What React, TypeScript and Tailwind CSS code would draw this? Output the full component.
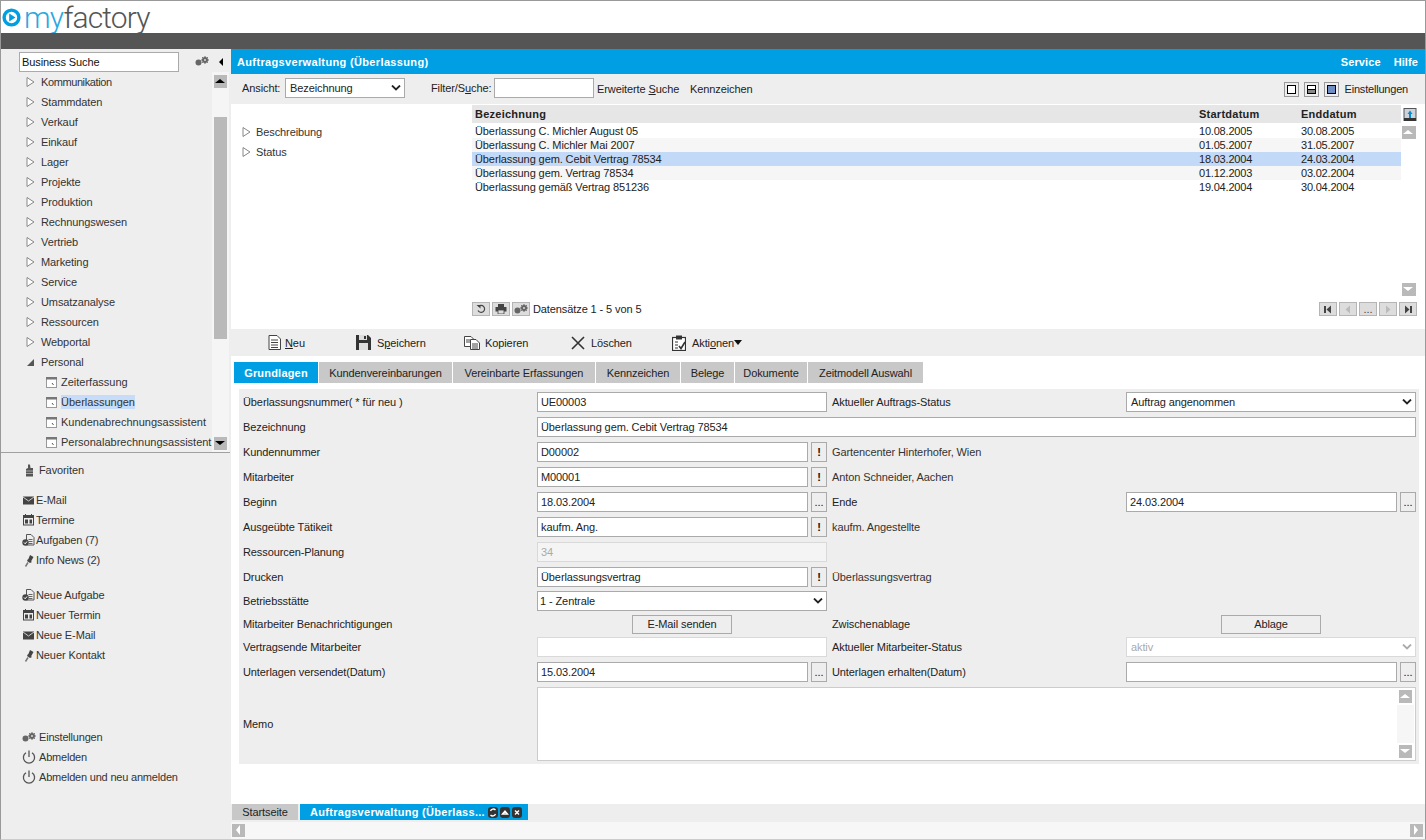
import React from "react";

const I = ({ w = 12, h = 12, children, className = "" }: { w?: number; h?: number; children: React.ReactNode; className?: string }) => (
  <svg width={w} height={h} viewBox={`0 0 ${w} ${h}`} className={`shrink-0 ${className}`}>{children}</svg>
);
const Tri = () => <I w={9} h={12}><path d="M1 1.5 L8 6 L1 10.5 Z" fill="#fff" stroke="#888" /></I>;
const TriOpen = () => <I w={9} h={12}><path d="M1 10 L8 10 L8 3 Z" fill="#555" /></I>;
const Win = () => (
  <I w={11} h={11}><rect x="0.5" y="0.5" width="10" height="10" fill="#fff" stroke="#999" /><rect x="0" y="0" width="11" height="2.5" fill="#777" /><path d="M6 6 L7.5 8" stroke="#555" /></I>
);
const Gears = ({ c = "#666" }: { c?: string }) => (
  <I w={14} h={10}><circle cx="3.5" cy="6.5" r="3" fill={c} /><circle cx="10" cy="4" r="3" fill={c} /><path d="M10 0 V8 M6 4 H14 M7.2 1.2 L12.8 6.8 M12.8 1.2 L7.2 6.8" stroke={c} strokeWidth="1" /><circle cx="10" cy="4" r="1" fill="#ddd" /></I>
);
const Mail = () => <I w={11} h={9}><rect width="11" height="8" y="0.5" fill="#444" /><path d="M0 1 L5.5 5 L11 1" stroke="#ccc" fill="none" /></I>;
const Cal = () => (
  <I w={11} h={12}><rect x="0.5" y="1.5" width="10" height="9.5" fill="#eee" stroke="#444" /><rect x="0" y="1" width="11" height="3" fill="#444" /><path d="M2.5 0 V2 M8.5 0 V2" stroke="#444" /><rect x="2" y="5.5" width="3" height="4" fill="#444" /><rect x="6.5" y="5.5" width="2.5" height="4" fill="#444" /></I>
);
const Task = () => (
  <I w={13} h={12}><path d="M4.5 0.5 H9 L12 3.5 V11 H4.5 Z" fill="#eee" stroke="#555" /><path d="M6.5 5.5 H10.5 M6.5 7.5 H10.5 M6.5 9.5 H10.5" stroke="#666" /><circle cx="3.5" cy="8.5" r="3.2" fill="#444" /><path d="M2 8.5 L3.2 9.8 L5 7.5" stroke="#fff" fill="none" /></I>
);
const Pin = () => (
  <I w={11} h={13}><path d="M7 1 L10.5 3 L8 7.5 L5 6 Z" fill="#444" /><path d="M5 5 L9 8 L7 9 L4 7 Z" fill="#444" /><path d="M5 8.5 L2.5 12.5" stroke="#777" strokeWidth="1.5" /></I>
);
const Power = () => (
  <I w={14} h={14}><path d="M4 2.8 A5.6 5.6 0 1 0 10 2.8" fill="none" stroke="#555" strokeWidth="1.3" /><path d="M7 0.5 V7" stroke="#555" strokeWidth="1.3" /></I>
);
const Thumb = () => (
  <I w={9} h={13}><path d="M3 0.5 H5 L5.5 4 H8 V12.5 H1 V5 L3 4 Z" fill="#555" /><path d="M1 7 H8 M1 9.5 H8" stroke="#ddd" strokeWidth="0.6" /></I>
);
const ScrollBtn = ({ dark, dir, wide }: { dark?: boolean; dir: "up" | "down" | "left" | "right"; wide?: boolean }) => {
  const c = dark ? "#000" : "#fff";
  const p = { up: "M2 9 L7 5 L12 9 Z", down: "M2 5 L12 5 L7 9 Z", left: "M9 2 L5 7 L9 12 Z", right: "M5 2 L9 7 L5 12 Z" }[dir];
  return <div className={`${wide ? "w-[14px]" : "w-[13px]"} h-[13px] bg-[#b9b9b9] shrink-0 overflow-hidden`}><I w={14} h={14} className="-ml-px -mt-px"><path d={p} fill={c} /></I></div>;
};

const U = ({ children }: { children: string }) => <span className="underline underline-offset-1">{children}</span>;

const tree = ["Kommunikation", "Stammdaten", "Verkauf", "Einkauf", "Lager", "Projekte", "Produktion", "Rechnungswesen", "Vertrieb", "Marketing", "Service", "Umsatzanalyse", "Ressourcen", "Webportal"];
const subs = ["Zeiterfassung", "Überlassungen", "Kundenabrechnungsassistent", "Personalabrechnungsassistent"];

const Sidebar = () => (
  <aside className="w-[230px] shrink-0 bg-[#eeeeee] flex flex-col">
    <div className="h-[23px] flex items-end pl-[18px]">
      <div className="w-[160px] h-[20px] bg-white border border-[#aaaaaa] flex items-center pl-[2px] text-[#111]">Business Suche</div>
      <div className="ml-[16px] mb-[6px]"><Gears /></div>
      <div className="ml-[10px] mb-[6px] w-0 h-0 border-y-[4px] border-y-transparent border-r-[4px] border-r-black" />
    </div>
    <div className="h-[380px] flex">
      <div className="w-[211px] shrink-0 overflow-hidden">
        {tree.map((t, i) => (
          <div key={t} className={`h-[20px] flex items-center pl-[25px] gap-[6px] ${i === 0 ? "tracking-[-0.4px]" : ""}`}><Tri />{t}</div>
        ))}
        <div className="h-[20px] flex items-center pl-[25px] gap-[6px]"><TriOpen />Personal</div>
        {subs.map((t, i) => (
          <div key={t} className="h-[20px] flex items-center pl-[45px] gap-[4px] whitespace-nowrap tracking-normal">
            <Win />
            <span className={i === 1 ? "bg-[#c6dcf8] leading-[14px]" : ""}>{t}</span>
          </div>
        ))}
      </div>
      <div className="w-[17px] bg-[#f5f5f5] flex flex-col items-center pt-[3px] pb-[2px]">
        <ScrollBtn dark dir="up" />
        <div className="w-[13px] h-[222px] bg-[#b9b9b9] mt-[29px]" />
        <div className="flex-1" />
        <ScrollBtn dark dir="down" />
      </div>
    </div>
    <div className="h-px w-[229px] bg-[#a0a0a0]" />
    <div className="flex flex-col">
      <div className="h-[20px] mt-[7px] flex items-center pl-[24px] gap-[5px]"><Thumb />Favoriten</div>
      <div className="h-[20px] mt-[10px] flex items-center pl-[22px] gap-[2px]"><Mail />E-Mail</div>
      <div className="h-[20px] flex items-center pl-[22px] gap-[2px]"><Cal />Termine</div>
      <div className="h-[20px] flex items-center pl-[21px] gap-px"><Task />Aufgaben (7)</div>
      <div className="h-[20px] flex items-center pl-[22px] gap-[2px]"><Pin />Info News (2)</div>
      <div className="h-[20px] mt-[15px] flex items-center pl-[21px] gap-px"><Task />Neue Aufgabe</div>
      <div className="h-[20px] flex items-center pl-[22px] gap-[2px]"><Cal />Neuer Termin</div>
      <div className="h-[20px] flex items-center pl-[22px] gap-[2px]"><Mail />Neue E-Mail</div>
      <div className="h-[20px] flex items-center pl-[22px] gap-[2px]"><Pin />Neuer Kontakt</div>
      <div className="h-[20px] mt-[62px] flex items-center pl-[21px] gap-[3px] tracking-[-0.2px]"><Gears />Einstellungen</div>
      <div className="h-[20px] flex items-center pl-[21px] gap-[3px] tracking-[-0.2px]"><Power />Abmelden</div>
      <div className="h-[20px] flex items-center pl-[21px] gap-[3px] tracking-[-0.2px]"><Power />Abmelden und neu anmelden</div>
    </div>
  </aside>
);

const rows = [
  ["Überlassung C. Michler August 05", "10.08.2005", "30.08.2005"],
  ["Überlassung C. Michler Mai 2007", "01.05.2007", "31.05.2007"],
  ["Überlassung gem. Cebit Vertrag 78534", "18.03.2004", "24.03.2004"],
  ["Überlassung gem. Vertrag 78534", "01.12.2003", "03.02.2004"],
  ["Überlassung gemäß Vertrag 851236", "19.04.2004", "30.04.2004"],
];

const PagerBtn = ({ children }: { children: React.ReactNode }) => (
  <div className="w-[18px] h-[14px] bg-[#dddddd] border border-[#b5b5b5] flex items-center justify-center text-[#333] leading-none">{children}</div>
);

const TopList = () => (
  <div className="h-[225px] bg-white flex">
    <div className="w-[241px] shrink-0 pt-[18px] pl-[11px]">
      <div className="h-[20px] flex items-center gap-[5px]"><Tri />Beschreibung</div>
      <div className="h-[20px] flex items-center gap-[5px]"><Tri />Status</div>
    </div>
    <div className="w-[929px] shrink-0 flex flex-col">
      <div className="h-[18px] mt-px bg-[#e6e6e6] flex items-center font-bold tracking-[0.25px] text-[#222]">
        <div className="w-[727px] pl-[3px]">Bezeichnung</div>
        <div className="w-[102px]">Startdatum</div>
        <div>Enddatum</div>
      </div>
      <div className="h-px" />
      {rows.map((r, i) => (
        <div key={r[0]} className={`h-[14px] flex items-center text-[#222] ${i === 2 ? "bg-[#c2d9f7]" : i % 2 ? "bg-[#f6f6f6]" : ""}`}>
          <div className="w-[727px] pl-[3px]">{r[0]}</div>
          <div className="w-[102px] tracking-[-0.2px]">{r[1]}</div>
          <div className="tracking-[-0.2px]">{r[2]}</div>
        </div>
      ))}
      <div className="flex-1" />
      <div className="h-[14px] mb-[13px] flex items-center gap-[2px]">
        <PagerBtn><I w={10} h={10}><path d="M2.5 2.5 A3.5 3.5 0 1 1 2 6.5" fill="none" stroke="#444" strokeWidth="1.2" /><path d="M0.5 1 L4.5 1 L4.5 4.5 Z" fill="#444" /></I></PagerBtn>
        <PagerBtn><I w={12} h={10}><rect x="3" y="0" width="6" height="3" fill="#444" /><rect x="0.5" y="3" width="11" height="4.5" fill="#444" /><rect x="3" y="6" width="6" height="4" fill="#ddd" stroke="#444" strokeWidth="0.8" /></I></PagerBtn>
        <PagerBtn><Gears /></PagerBtn>
        <span className="ml-px text-[#222]">Datensätze 1 - 5 von 5</span>
      </div>
    </div>
    <div className="flex-1 flex flex-col">
      <div className="h-[16px] mt-[4px] pl-[2px]">
        <I w={14} h={14}><rect x="1" y="0.5" width="12" height="12" fill="#ccd3da" stroke="#555" /><rect x="1" y="10" width="12" height="3" fill="#333" /><path d="M7 2.5 L9.5 6 H8 V10 H6 V6 H4.5 Z" fill="#0a8ad0" /></I>
      </div>
      <div className="h-[170px] mt-[2px] ml-px flex flex-col items-start">
        <ScrollBtn dir="up" wide />
        <div className="flex-1" />
        <ScrollBtn dir="down" wide />
      </div>
    </div>
  </div>
);

const PagerBar = () => (
  <div className="h-0 flex justify-end pr-[8px] gap-[2px] relative -top-[27px]">
    {[
      <I w={10} h={9} key="a"><rect x="1" y="1" width="2" height="7" fill="#444" /><path d="M8 0.5 V8.5 L3.5 4.5 Z" fill="#444" /></I>,
      <I w={10} h={9} key="b"><path d="M7 0.5 V8.5 L2.5 4.5 Z" fill="#bbb" /></I>,
      <span key="c" className="text-[#444]">...</span>,
      <I w={10} h={9} key="d"><path d="M3 0.5 V8.5 L7.5 4.5 Z" fill="#bbb" /></I>,
      <I w={10} h={9} key="e"><rect x="7" y="1" width="2" height="7" fill="#444" /><path d="M2 0.5 V8.5 L6.5 4.5 Z" fill="#444" /></I>,
    ].map((x, i) => <PagerBtn key={i}>{x}</PagerBtn>)}
  </div>
);

const Toolbar = () => (
  <div className="h-[27px] bg-[#eeeeee] flex items-center text-[#222]">
    <div className="w-[125px] pl-[37px] flex items-center gap-[4px] shrink-0">
      <I w={13} h={15}><path d="M1 0.5 H9 L12.5 4 V14.5 H1 Z" fill="#fff" stroke="#444" /><path d="M3 5 H10 M3 7.5 H10 M3 10 H10 M3 12.5 H10" stroke="#444" /></I>
      <span><U>N</U>eu</span>
    </div>
    <div className="w-[108px] flex items-center gap-[6px] shrink-0">
      <I w={15} h={15}><path d="M0 0 H12 L15 3 V15 H0 Z" fill="#333" /><rect x="3" y="0" width="8" height="5" fill="#ddd" /><rect x="8" y="1" width="2" height="3" fill="#333" /><rect x="3" y="8" width="9" height="7" fill="#ddd" /></I>
      <span>S<U>p</U>eichern</span>
    </div>
    <div className="w-[107px] flex items-center gap-[5px] shrink-0">
      <I w={16} h={14}><path d="M0.5 0.5 H7 L9.5 3 V10.5 H0.5 Z" fill="#fff" stroke="#444" /><path d="M6.5 3.5 H12 L15.5 7 V13.5 H6.5 Z" fill="#fff" stroke="#444" /><path d="M2 4 H6 M2 6 H6 M8 8 H14 M8 10 H14 M8 12 H14" stroke="#444" /></I>
      <span>Kopieren</span>
    </div>
    <div className="w-[101px] flex items-center gap-[6px] shrink-0">
      <I w={14} h={14}><path d="M1 1 L13 13 M13 1 L1 13" stroke="#333" strokeWidth="1.6" /></I>
      <span>Löschen</span>
    </div>
    <div className="flex items-center gap-[6px] shrink-0">
      <I w={14} h={16}><rect x="0.5" y="2.5" width="13" height="13" fill="#fff" stroke="#333" strokeWidth="1.2" /><rect x="4" y="0.5" width="6" height="4" fill="#333" /><path d="M3 7 H6 M3 10 H6 M3 13 H6" stroke="#333" /><path d="M7 11 L9 13.5 L13 7" stroke="#333" strokeWidth="1.6" fill="none" /></I>
      <span className="flex items-center">Akti<U>o</U>nen<span className="w-0 h-0 border-x-[4px] border-x-transparent border-t-[5px] border-t-[#111]" /></span>
    </div>
  </div>
);

const tabs = [
  ["Grundlagen", "w-[84px]"], ["Kundenvereinbarungen", "w-[133px]"], ["Vereinbarte Erfassungen", "w-[142px]"], ["Kennzeichen", "w-[84px]"], ["Belege", "w-[53px]"], ["Dokumente", "w-[72px]"], ["Zeitmodell Auswahl", "w-[115px]"],
];
const Tabs = () => (
  <div className="h-[33px] bg-white pt-[6px] pl-[3px] flex items-start gap-px">
    {tabs.map(([t, w], i) => (
      <div key={t} className={`${w} h-[21px] flex items-center justify-center ${i === 0 ? "bg-[#009fe3] text-white font-bold tracking-[0.2px]" : "bg-[#c8c8c8] text-[#222]"}`}>{t}</div>
    ))}
  </div>
);

const Input = ({ v, className = "w-[290px]" }: { v?: string; className?: string }) => (
  <div className={`${className} h-[20px] bg-white border border-[#aaaaaa] flex items-center pl-[3px] text-[#222]`}>{v}</div>
);
const Btn = ({ t }: { t: string }) => (
  <div className={`w-[16px] h-[20px] border border-[#aaaaaa] bg-[#eeeeee] flex items-center justify-center text-[#111] ${t === "!" ? "font-bold" : ""}`}>{t}</div>
);
const Chev = ({ c = "#222" }: { c?: string }) => (
  <I w={10} h={6}><path d="M1 0.5 L5 4.5 L9 0.5" fill="none" stroke={c} strokeWidth="1.8" /></I>
);
const Select = ({ v, w = "w-[290px]", off, pad = "pl-[4px]" }: { v: string; w?: string; off?: boolean; pad?: string }) => (
  <div className={`${w} h-[20px] bg-white border ${off ? "border-[#d9d9d9] text-[#aaaaaa]" : "border-[#aaaaaa] text-[#222]"} flex items-center justify-between ${pad} pr-[3px]`}>
    {v}<Chev c={off ? "#aaaaaa" : "#222"} />
  </div>
);
const FieldBtn = ({ v, t }: { v?: string; t: string }) => (
  <div className="flex gap-[3px] w-[290px]"><Input v={v} className="w-[271px]" /><Btn t={t} /></div>
);
const Label = ({ t, w = "w-[294px]" }: { t?: string; w?: string }) => <div className={`${w} shrink-0 text-[#222]`}>{t}</div>;
const Side = ({ t }: { t: string }) => <div className="pl-[5px] text-[#333]">{t}</div>;
const Row = ({ h = "h-[25px]", children }: { h?: string; children: React.ReactNode }) => (
  <div className={`${h} flex items-center`}>{children}</div>
);
const Gap = () => <div className="w-[5px] shrink-0" />;
const PlainBtn = ({ t }: { t: string }) => (
  <div className="w-[100px] h-[19px] border border-[#aaaaaa] bg-[#eeeeee] flex items-center justify-center text-[#222]">{t}</div>
);

const Form = () => (
  <div className="ml-[8px] w-[1180px] h-[375px] bg-[#eeeeee] pl-[4px]">
    <Row><Label t="Überlassungsnummer( * für neu )" /><Input v="UE00003" /><Gap /><Label t="Aktueller Auftrags-Status" /><Select v="Auftrag angenommen" /></Row>
    <Row><Label t="Bezeichnung" /><Input v="Überlassung gem. Cebit Vertrag 78534" className="w-[879px]" /></Row>
    <Row><Label t="Kundennummer" /><FieldBtn v="D00002" t="!" /><Side t="Gartencenter Hinterhofer, Wien" /></Row>
    <Row><Label t="Mitarbeiter" /><FieldBtn v="M00001" t="!" /><Side t="Anton Schneider, Aachen" /></Row>
    <Row><Label t="Beginn" /><FieldBtn v="18.03.2004" t="..." /><Gap /><Label t="Ende" /><FieldBtn v="24.03.2004" t="..." /></Row>
    <Row><Label t="Ausgeübte Tätikeit" /><FieldBtn v="kaufm. Ang." t="!" /><Side t="kaufm. Angestellte" /></Row>
    <Row><Label t="Ressourcen-Planung" /><div className="w-[290px] h-[20px] bg-[#f4f4f4] border border-[#d9d9d9] flex items-center pl-[3px] text-[#aaaaaa]">34</div></Row>
    <Row><Label t="Drucken" /><FieldBtn v="Überlassungsvertrag" t="!" /><Side t="Überlassungsvertrag" /></Row>
    <Row h="h-[24px]"><Label t="Betriebsstätte" /><Select v="1 - Zentrale" pad="pl-[2px]" /></Row>
    <Row h="h-[22px]"><Label t="Mitarbeiter Benachrichtigungen" /><div className="w-[290px] flex justify-center"><PlainBtn t="E-Mail senden" /></div><Gap /><Label t="Zwischenablage" /><div className="w-[290px] flex justify-center"><PlainBtn t="Ablage" /></div></Row>
    <Row h="h-[24px]"><Label t="Vertragsende Mitarbeiter" /><div className="w-[290px] h-[20px] bg-white border border-[#d9d9d9]" /><Gap /><Label t="Aktueller Mitarbeiter-Status" /><Select v="aktiv" off /></Row>
    <Row h="h-[26px]"><Label t="Unterlagen versendet(Datum)" /><FieldBtn v="15.03.2004" t="..." /><Gap /><Label t="Unterlagen erhalten(Datum)" /><FieldBtn t="..." /></Row>
    <Row h="h-[78px]">
      <Label t="Memo" />
      <div className="w-[879px] h-[74px] bg-white border border-[#cccccc] flex justify-end pr-px">
        <div className="w-[17px] flex flex-col items-center py-[2px]">
          <ScrollBtn dir="up" />
          <div className="flex-1 w-full bg-[#f6f6f6] my-[2px]" />
          <ScrollBtn dir="down" />
        </div>
      </div>
    </Row>
  </div>
);

const Mini = ({ d }: { d: string }) => (
  <I w={10} h={11} className="mr-[2px]"><rect width="10" height="11" rx="3" fill="#333" /><path d={d} fill="none" stroke="#fff" strokeWidth="1.4" /></I>
);

const BottomBars = () => (
  <div className="flex flex-col">
    <div className="h-[18px] bg-[#eeeeee] flex">
      <div className="w-[66px] h-[16px] ml-px bg-[#c8c8c8] flex items-center justify-center text-[#222]">Startseite</div>
      <div className="w-[228px] h-[16px] ml-[2px] bg-[#009fe3] flex items-center text-white pl-[10px] font-bold">
        <span className="w-[178px] whitespace-nowrap tracking-[0.3px]">Auftragsverwaltung (Überlass...</span>
        <Mini d="M2.5 4 A3 3 0 0 1 7.5 3 M7.5 7 A3 3 0 0 1 2.5 8" />
        <Mini d="M2.5 7 L5 4 L7.5 7 Z" />
        <Mini d="M3 3.5 L7 7.5 M7 3.5 L3 7.5" />
      </div>
    </div>
    <div className="h-[17px] bg-[#f7f7f7] flex items-center justify-between pl-px pr-[2px]">
      <ScrollBtn dir="left" /><ScrollBtn dir="right" />
    </div>
  </div>
);

export default function App() {
  return (
    <div className="w-[1426px] h-[840px] overflow-hidden border border-[#999999] border-b-[#cccccc] bg-white text-[11px] leading-[14px] tracking-[-0.1px] text-[#333] flex flex-col" style={{ fontFamily: '"Liberation Sans", Arial, sans-serif' }}>
      <header className="h-[32px] shrink-0 flex items-start pl-px gap-[3px]">
        <I w={19} h={19} className="mt-[7px]"><circle cx="9.5" cy="9.5" r="7.4" fill="none" stroke="#009fe3" strokeWidth="3.4" /><path d="M7.2 5.5 L13.5 9.5 L7.2 13.5 Z" fill="#009fe3" /></I>
        <div className="text-[30px] leading-[36px] tracking-[-0.85px] font-light text-[#555] -mt-[1px]" style={{ fontFamily: 'Roboto, Lato, sans-serif' }}>
          <span className="text-[#2aa8e0]">my</span>factory
        </div>
      </header>
      <div className="h-[16px] shrink-0 bg-[#555556] relative" />
      <div className="flex flex-1 min-h-0">
        <Sidebar />
        <main className="flex-1 min-w-0 flex flex-col">
          <div className="h-[25px] bg-[#009fe3] flex items-center justify-between pl-[6px] pr-[7px] text-white font-bold">
            <div className="tracking-[0.35px]">Auftragsverwaltung (Überlassung)</div>
            <div className="flex gap-[13px] tracking-[0.1px]"><span>Service</span><span>Hilfe</span></div>
          </div>
          <div className="h-[30px] bg-[#eeeeee] flex items-center text-[#222] pb-[2px]">
            <div className="ml-[11px] w-[43px]">Ansicht:</div>
            <Select v="Bezeichnung" w="w-[120px]" />
            <div className="ml-[26px] w-[63px]">Filter/S<U>u</U>che:</div>
            <div className="w-[100px] h-[20px] bg-white border border-[#aaaaaa]" />
            <div className="ml-[3px] w-[93px] mt-px">Erweiterte <U>S</U>uche</div>
            <div className="mt-px">Kennzeichen</div>
            <div className="flex-1" />
            <div className="flex gap-[5px] items-center mt-[2px]">
              {[0, 1, 2].map((k) => (
                <div key={k} className="w-[15px] h-[15px] border border-[#999999] flex items-center justify-center">
                  <div className={`w-[9px] h-[9px] border border-black ${k === 2 ? "bg-[#6f8fc4]" : "bg-white"} flex items-end`}>
                    {k === 1 && <div className="h-[4px] w-full bg-[#888] border-t border-black" />}
                  </div>
                </div>
              ))}
            </div>
            <div className="ml-[6px] mr-[17px] mt-px tracking-[-0.2px]">Einstellungen</div>
          </div>
          <TopList />
          <PagerBar />
          <Toolbar />
          <Tabs />
          <Form />
          <div className="flex-1" />
          <BottomBars />
        </main>
      </div>
    </div>
  );
}
